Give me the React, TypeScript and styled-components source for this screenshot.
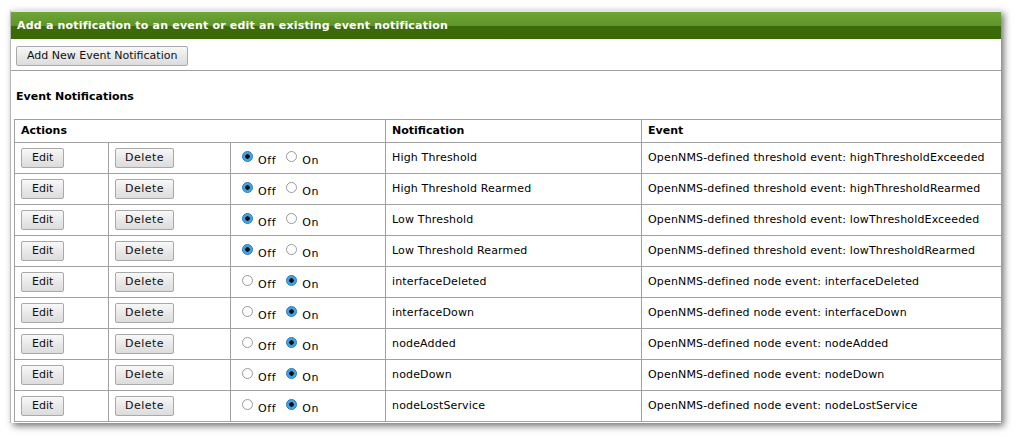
import React from "react";
import styled, { createGlobalStyle } from "styled-components";

const GlobalStyle = createGlobalStyle`
  body {
    margin: 0;
    background: #ffffff;
    font-family: "DejaVu Sans", Verdana, sans-serif;
    color: #000;
  }
`;

const Page = styled.div`
  padding: 10px 17px 18px 10px;
  width: 1018px;
  height: 441px;
  box-sizing: border-box;
`;

const Panel = styled.div`
  width: 991px;
  height: 413px;
  box-sizing: border-box;
  background: #fff;
  border-top: 2px solid #e6e6e6;
  border-left: 1px solid #b8b8b8;
  box-shadow: 3px 3px 7px rgba(0, 0, 0, 0.55);
  display: flex;
  flex-direction: column;
`;

const PanelHeader = styled.div`
  height: 27px;
  display: flex;
  align-items: center;
  padding: 0 6px;
  background: linear-gradient(to bottom, #70a536 0%, #5e942a 50%, #3b6c08 52%, #386907 100%);
  color: #fff;
  font-size: 11px;
  font-weight: bold;
  letter-spacing: 0.2px;
`;

const Toolbar = styled.div`
  padding: 5px 5px 4px;
  border-bottom: 1px solid #a0a0a0;
`;

const Button = styled.button<{ $wide?: boolean }>`
  font-family: "DejaVu Sans", Verdana, sans-serif;
  font-size: 11px;
  color: #111;
  height: 20px;
  padding: 0 ${({ $wide }) => ($wide ? "9px" : "10px")};
  border: 1px solid #a9a9a9;
  border-radius: 2px;
  background: linear-gradient(to bottom, #f8f8f8 0%, #e9e9e9 50%, #dcdcdc 100%);
  letter-spacing: ${({ $wide }) => ($wide ? "0.5px" : "0")};
  cursor: pointer;
`;

const SectionTitle = styled.h3`
  margin: 0;
  padding: 19px 5px 16px;
  font-size: 11px;
  font-weight: bold;
`;

const Table = styled.table`
  margin-left: 3px;
  width: 988px;
  border-collapse: collapse;
  font-size: 11px;
  letter-spacing: 0.15px;
  table-layout: fixed;
`;

const HeadCell = styled.th`
  text-align: left;
  font-weight: bold;
  height: 22px;
  padding: 0 6px;
  border: 1px solid #a0a0a0;
  letter-spacing: 0;
`;

const Cell = styled.td<{ $pad?: number }>`
  height: 30px;
  padding: 0 ${({ $pad }) => $pad ?? 6}px;
  border: 1px solid #a0a0a0;
  vertical-align: middle;
  white-space: nowrap;
`;

const RadioGroup = styled.div`
  display: flex;
  align-items: center;
  padding-top: 2px;
`;

const RadioLabel = styled.label`
  display: inline-flex;
  align-items: center;
  margin-right: 10px;
`;

const Radio = styled.input.attrs({ type: "radio" })`
  appearance: none;
  width: 11px;
  height: 11px;
  margin: -5px 5px 0 0;
  border-radius: 50%;
  border: 1px solid #9a9a9a;
  background: #fff;
  box-sizing: border-box;
  &:checked {
    border-color: #2a79b5;
    background: radial-gradient(circle, #111 0 2px, #3b9de0 2.5px, #5bb2ea 100%);
  }
`;

const Caption = styled.span`
  position: relative;
  top: 2px;
  letter-spacing: 0.6px;
`;

type Row = { name: string; event: string; on: boolean };

const rows: Row[] = [
  { name: "High Threshold", event: "OpenNMS-defined threshold event: highThresholdExceeded", on: false },
  { name: "High Threshold Rearmed", event: "OpenNMS-defined threshold event: highThresholdRearmed", on: false },
  { name: "Low Threshold", event: "OpenNMS-defined threshold event: lowThresholdExceeded", on: false },
  { name: "Low Threshold Rearmed", event: "OpenNMS-defined threshold event: lowThresholdRearmed", on: false },
  { name: "interfaceDeleted", event: "OpenNMS-defined node event: interfaceDeleted", on: true },
  { name: "interfaceDown", event: "OpenNMS-defined node event: interfaceDown", on: true },
  { name: "nodeAdded", event: "OpenNMS-defined node event: nodeAdded", on: true },
  { name: "nodeDown", event: "OpenNMS-defined node event: nodeDown", on: true },
  { name: "nodeLostService", event: "OpenNMS-defined node event: nodeLostService", on: true },
];

export default function App() {
  return (
    <>
      <GlobalStyle />
      <Page>
        <Panel>
          <PanelHeader>Add a notification to an event or edit an existing event notification</PanelHeader>
          <Toolbar>
            <Button>Add New Event Notification</Button>
          </Toolbar>
          <SectionTitle>Event Notifications</SectionTitle>
          <Table>
            <colgroup>
              <col style={{ width: 94 }} />
              <col style={{ width: 122 }} />
              <col style={{ width: 155 }} />
              <col style={{ width: 256 }} />
              <col />
            </colgroup>
            <thead>
              <tr>
                <HeadCell colSpan={3}>Actions</HeadCell>
                <HeadCell>Notification</HeadCell>
                <HeadCell>Event</HeadCell>
              </tr>
            </thead>
            <tbody>
              {rows.map((r) => (
                <tr key={r.name}>
                  <Cell $pad={6}>
                    <Button>Edit</Button>
                  </Cell>
                  <Cell $pad={6}>
                    <Button $wide>Delete</Button>
                  </Cell>
                  <Cell $pad={11}>
                    <RadioGroup>
                      <RadioLabel>
                        <Radio name={r.name} defaultChecked={!r.on} />
                        <Caption>Off</Caption>
                      </RadioLabel>
                      <RadioLabel>
                        <Radio name={r.name} defaultChecked={r.on} />
                        <Caption>On</Caption>
                      </RadioLabel>
                    </RadioGroup>
                  </Cell>
                  <Cell>{r.name}</Cell>
                  <Cell>{r.event}</Cell>
                </tr>
              ))}
            </tbody>
          </Table>
        </Panel>
      </Page>
    </>
  );
}
